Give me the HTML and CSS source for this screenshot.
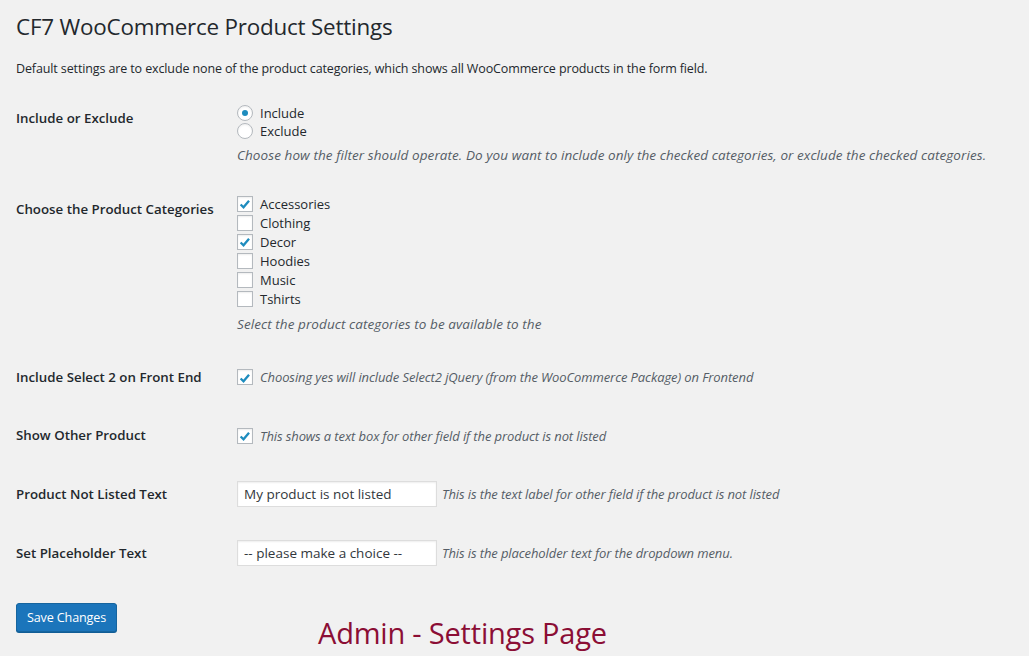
FILE: index.html
```html
<!DOCTYPE html>
<html>
<head>
<meta charset="utf-8">
<link rel="stylesheet" href="styles.css">
</head>
<body>
<div class="wrap">
  <h1 class="title">CF7 WooCommerce Product Settings</h1>
  <p class="intro">Default settings are to exclude none of the product categories, which shows all WooCommerce products in the form field.</p>

  <div class="row row-multi">
    <div class="th">Include or Exclude</div>
    <div class="td td-radio">
      <label class="line radio-line"><span class="radio checked"></span>Include</label>
      <label class="line radio-line"><span class="radio"></span>Exclude</label>
      <p class="desc desc-block">Choose how the filter should operate. Do you want to include only the checked categories, or exclude the checked categories.</p>
    </div>
  </div>

  <div class="row row-multi">
    <div class="th th-cats">Choose the Product Categories</div>
    <div class="td">
      <label class="line"><span class="cb checked"><svg viewBox="0 0 16 16"><path d="M3 8.6 L6.3 11.8 L12.6 4.2" /></svg></span>Accessories</label>
      <label class="line"><span class="cb"></span>Clothing</label>
      <label class="line"><span class="cb checked"><svg viewBox="0 0 16 16"><path d="M3 8.6 L6.3 11.8 L12.6 4.2" /></svg></span>Decor</label>
      <label class="line"><span class="cb"></span>Hoodies</label>
      <label class="line"><span class="cb"></span>Music</label>
      <label class="line"><span class="cb"></span>Tshirts</label>
      <p class="desc desc-block desc-cats">Select the product categories to be available to the</p>
    </div>
  </div>

  <div class="row row-single">
    <div class="th">Include Select 2 on Front End</div>
    <div class="td">
      <label class="line"><span class="cb checked"><svg viewBox="0 0 16 16"><path d="M3 8.6 L6.3 11.8 L12.6 4.2" /></svg></span><span class="desc">Choosing yes will include Select2 jQuery (from the WooCommerce Package) on Frontend</span></label>
    </div>
  </div>

  <div class="row row-single">
    <div class="th">Show Other Product</div>
    <div class="td">
      <label class="line"><span class="cb checked"><svg viewBox="0 0 16 16"><path d="M3 8.6 L6.3 11.8 L12.6 4.2" /></svg></span><span class="desc">This shows a text box for other field if the product is not listed</span></label>
    </div>
  </div>

  <div class="row row-input">
    <div class="th">Product Not Listed Text</div>
    <div class="td td-input">
      <input class="text" type="text" value="My product is not listed">
      <span class="desc">This is the text label for other field if the product is not listed</span>
    </div>
  </div>

  <div class="row row-input">
    <div class="th">Set Placeholder Text</div>
    <div class="td td-input">
      <input class="text" type="text" value="-- please make a choice --">
      <span class="desc">This is the placeholder text for the dropdown menu.</span>
    </div>
  </div>

  <div class="footer">
    <button class="button-primary">Save Changes</button>
    <div class="caption">Admin - Settings Page</div>
  </div>
</div>
</body>
</html>
```

FILE: styles.css
```css
* { box-sizing: border-box; }
html, body {
  margin: 0;
  padding: 0;
  background: #f1f1f1;
}
body {
  font-family: "Open Sans", "Noto Sans", sans-serif;
  font-size: 13px;
  color: #23282d;
  overflow: hidden;
}
.wrap {
  padding: 0 16px;
}
.title {
  margin: 0;
  padding-top: 12px;
  font-size: 22.4px;
  font-weight: 400;
  line-height: 30px;
  letter-spacing: -0.2px;
  color: #23282d;
}
.intro {
  margin: 18px 0 0;
  font-size: 12.5px;
  line-height: 18px;
  letter-spacing: -0.12px;
}
.row {
  display: grid;
  grid-template-columns: 221px 1fr;
}
.th {
  font-weight: 600;
  font-size: 13.3px;
  line-height: 19px;
  letter-spacing: 0;
}
.row-multi .th {
  padding-top: 20px;
}
.row-multi .th-cats {
  padding-top: 21px;
}
.row-multi .td {
  padding: 15px 0 15px;
}
.wrap > .row:nth-of-type(1) { margin-top: 11px; }
.line {
  display: flex;
  align-items: center;
  height: 19px;
  font-size: 13px;
  letter-spacing: 0;
}
.radio-line { height: 18px; }
.radio, .cb {
  flex: none;
  width: 16px;
  height: 16px;
  margin-right: 7px;
  background: #fff;
  border: 1px solid #b4b9be;
  box-shadow: inset 0 1px 2px rgba(0,0,0,0.07);
  display: flex;
  align-items: center;
  justify-content: center;
}
.radio {
  border-radius: 50%;
}
.radio.checked::after {
  content: "";
  width: 6px;
  height: 6px;
  border-radius: 50%;
  background: #1e8cbe;
}
.cb svg {
  width: 14px;
  height: 14px;
  fill: none;
  stroke: #1e8cbe;
  stroke-width: 2.6;
  stroke-linecap: butt;
  stroke-linejoin: miter;
  margin-top: 1px;
}
.desc {
  font-style: italic;
  color: #555d66;
  font-size: 13px;
  letter-spacing: -0.1px;
}
.line .desc { margin-left: 0; }
.desc-block {
  margin: 6px 0 0;
  line-height: 18px;
  font-size: 13.5px;
  letter-spacing: 0.08px;
}
.desc-cats { margin-top: 6.5px; }
.row-single .th,
.row-single .td {
  padding-top: 20px;
  padding-bottom: 20px;
}
.row-single { height: 58.5px; }
.row-input {
  align-items: center;
  height: 59px;
}
.td-input {
  display: flex;
  align-items: center;
}
.text {
  width: 200px;
  height: 26px;
  margin: 0 5px 0 0;
  padding: 3px 6px;
  border: 1px solid #ddd;
  box-shadow: inset 0 1px 2px rgba(0,0,0,0.07);
  background: #fff;
  font-family: "Open Sans", "Noto Sans", sans-serif;
  font-size: 13.5px;
  color: #32373c;
  outline: none;
}
.footer {
  display: flex;
  align-items: flex-start;
  margin-top: 20px;
}
.button-primary {
  width: 101px;
  height: 29px;
  padding: 0;
  background: #1b75bb;
  border: 1px solid #16659f;
  border-radius: 3px;
  box-shadow: 0 1px 0 #105d96;
  color: #fff;
  font-family: "Open Sans", "Noto Sans", sans-serif;
  font-size: 12.6px;
  letter-spacing: -0.15px;
  cursor: pointer;
}
.caption {
  margin-left: 201px;
  margin-top: 10px;
  font-size: 29px;
  line-height: 40px;
  color: #8b0e35;
  letter-spacing: -0.2px;
}
```
